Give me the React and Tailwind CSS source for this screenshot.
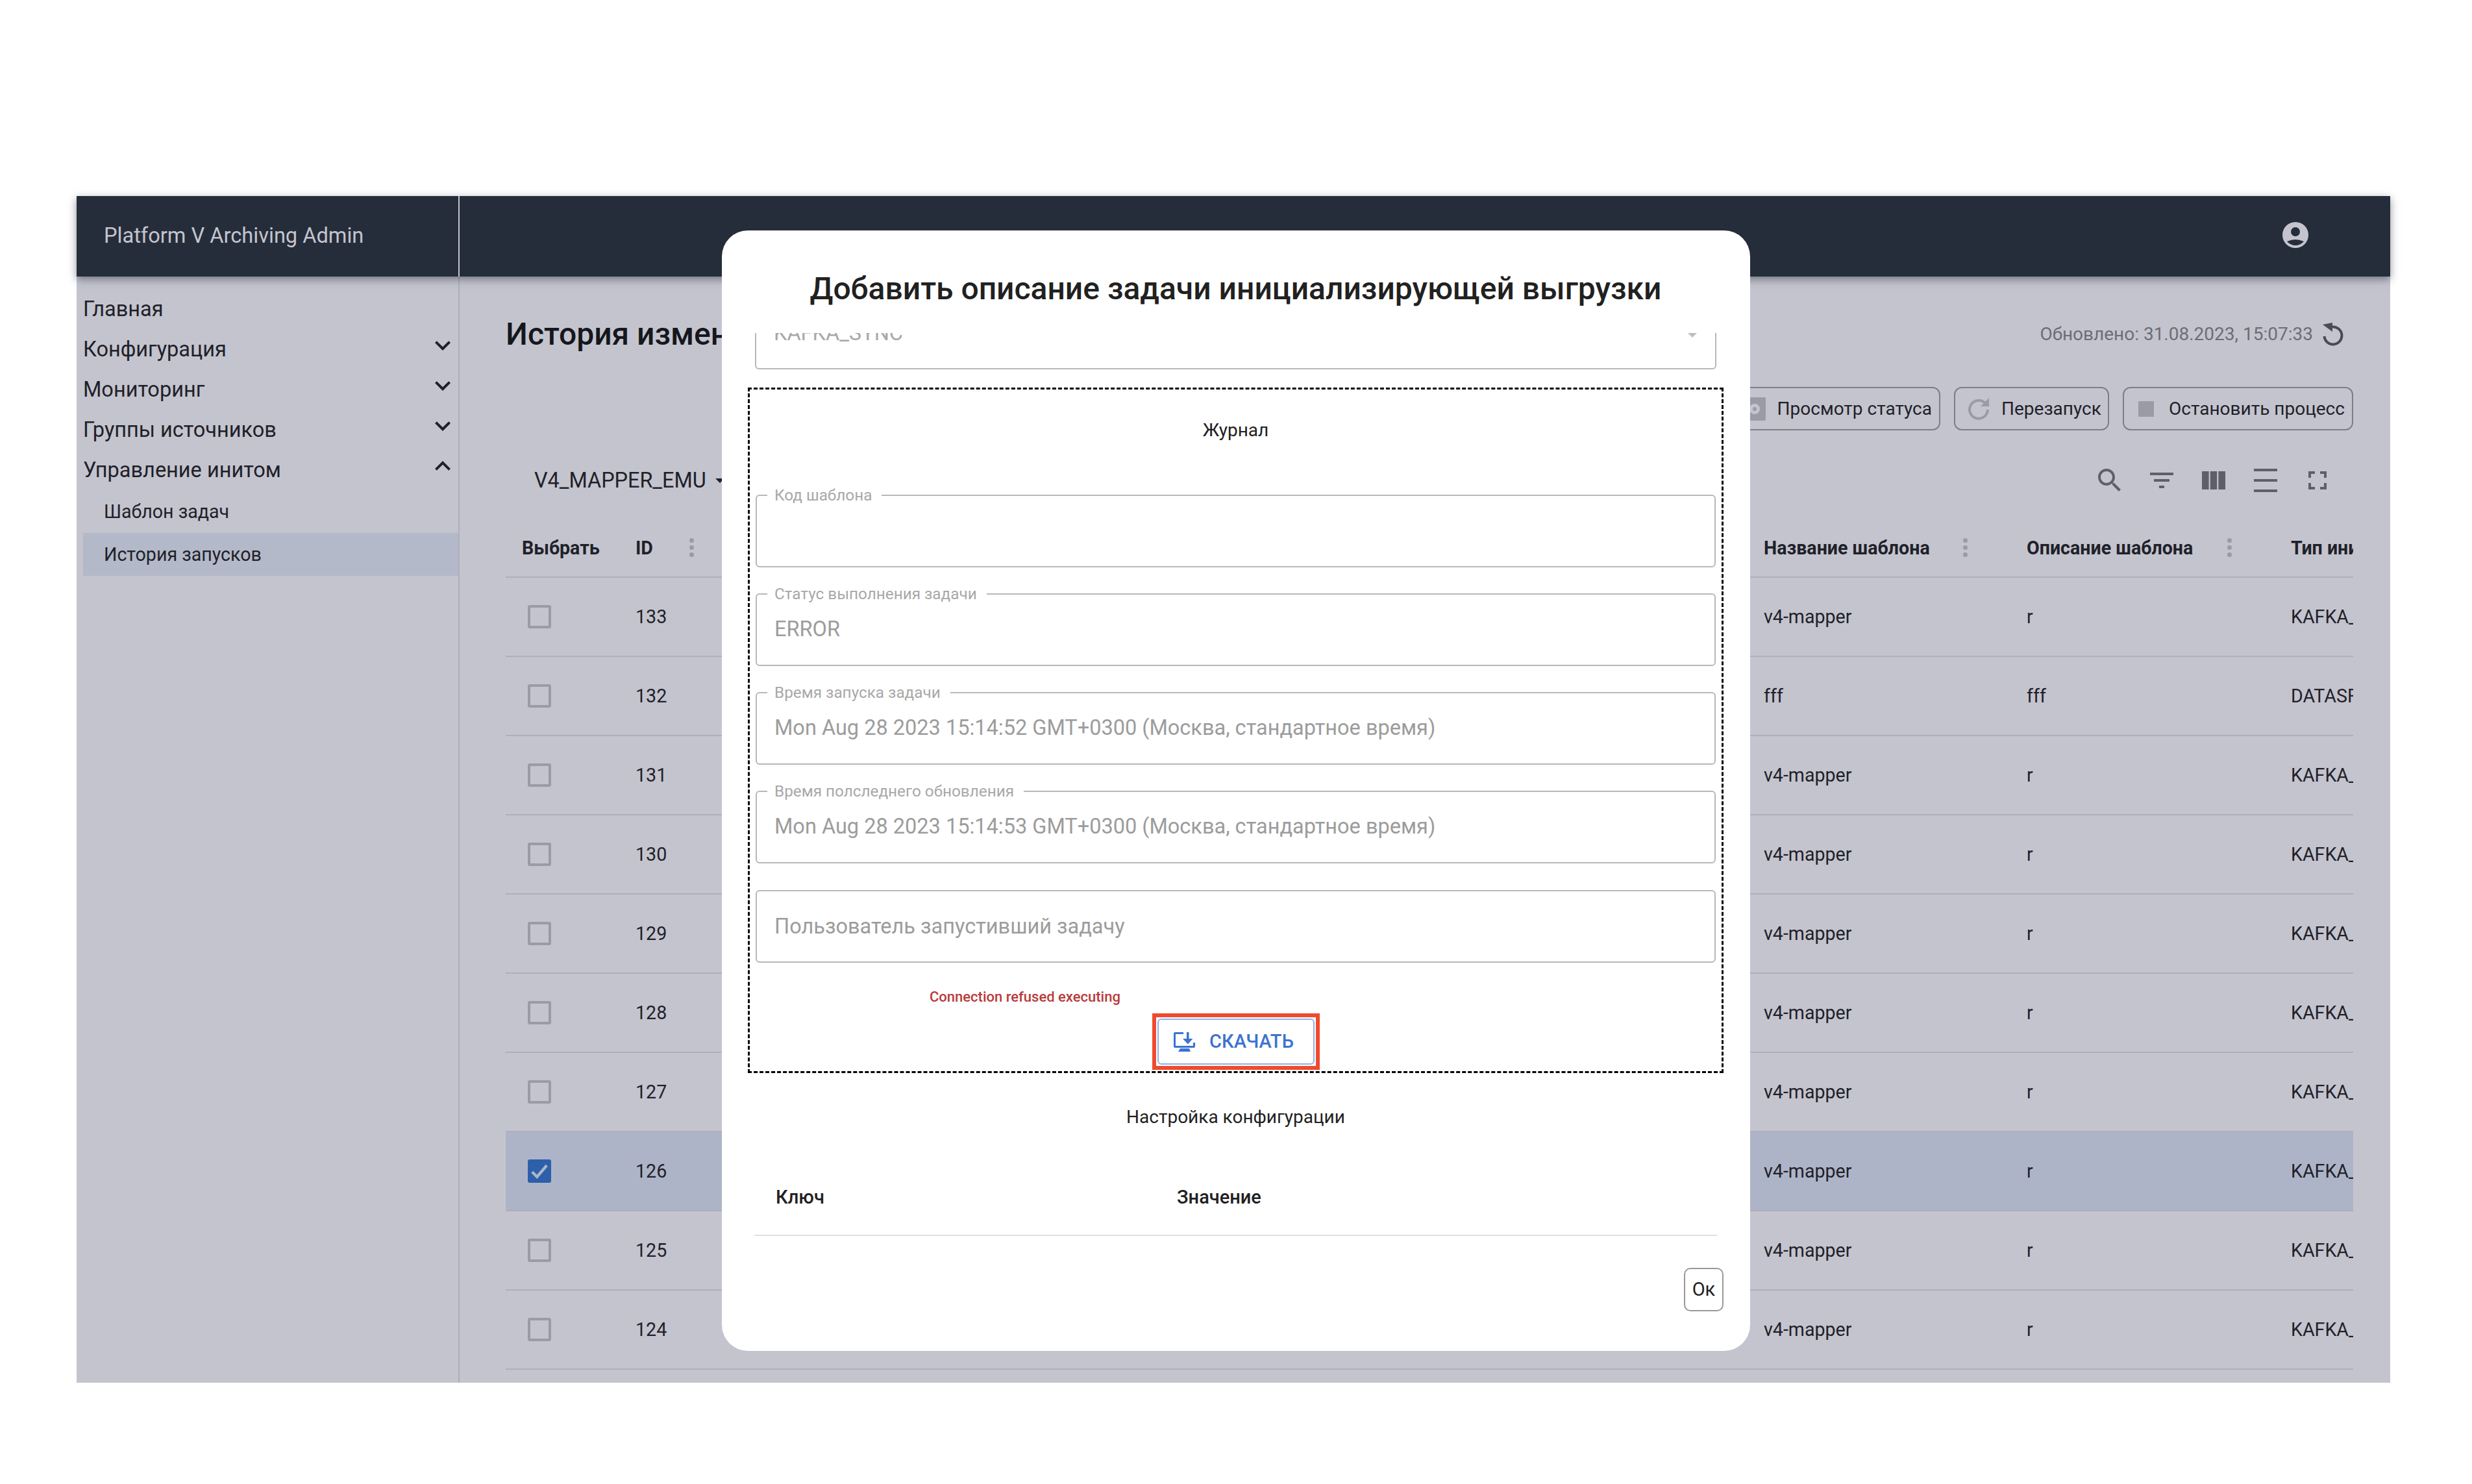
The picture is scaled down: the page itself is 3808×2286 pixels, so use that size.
const font = 'font-["Roboto",sans-serif]';

const menu = [
    { label: 'Конфигурация', icon: 'down' },
    { label: 'Мониторинг', icon: 'down' },
    { label: 'Группы источников', icon: 'down' },
    { label: 'Управление инитом', icon: 'up' },
];

const rows = [
    { id: 133, name: 'v4-mapper', desc: 'r', type: 'KAFKA_' },
    { id: 132, name: 'fff', desc: 'fff', type: 'DATASF' },
    { id: 131, name: 'v4-mapper', desc: 'r', type: 'KAFKA_' },
    { id: 130, name: 'v4-mapper', desc: 'r', type: 'KAFKA_' },
    { id: 129, name: 'v4-mapper', desc: 'r', type: 'KAFKA_' },
    { id: 128, name: 'v4-mapper', desc: 'r', type: 'KAFKA_' },
    { id: 127, name: 'v4-mapper', desc: 'r', type: 'KAFKA_' },
    { id: 126, name: 'v4-mapper', desc: 'r', type: 'KAFKA_', checked: true },
    { id: 125, name: 'v4-mapper', desc: 'r', type: 'KAFKA_' },
    { id: 124, name: 'v4-mapper', desc: 'r', type: 'KAFKA_' },
];

const fields = [
    { label: 'Код шаблона', value: '' },
    { label: 'Статус выполнения задачи', value: 'ERROR' },
    { label: 'Время запуска задачи', value: 'Mon Aug 28 2023 15:14:52 GMT+0300 (Москва, стандартное время)' },
    { label: 'Время полследнего обновления', value: 'Mon Aug 28 2023 15:14:53 GMT+0300 (Москва, стандартное время)' },
];

function Dots() {
    return (
        <div className="flex flex-col gap-[4px]">
            <span className="size-[7px] rounded-full bg-[#9a9ba4]" />
            <span className="size-[7px] rounded-full bg-[#9a9ba4]" />
            <span className="size-[7px] rounded-full bg-[#9a9ba4]" />
        </div>
    );
}

function Chevron({ up }) {
    return (
        <svg width="48" height="48" viewBox="0 0 24 24" fill="#1f2129" className="-translate-y-[6px]">
            {up ? <path d="m12 8-6 6 1.41 1.41L12 10.83l4.59 4.58L18 14z" /> : <path d="M16.59 8.59 12 13.17 7.41 8.59 6 10l6 6 6-6z" />}
        </svg>
    );
}

function Field({ label, value }) {
    return (
        <fieldset className="h-[123px] rounded-[6px] border-[2px] border-[#b8b8b8] px-[16px]">
            <legend className="pl-[11px] pr-[15px] text-[24.3px] leading-[24px] text-[#a8a8a8]">{label}</legend>
            <div className="ml-[11px] flex h-[85px] items-center text-[32.5px] text-[#9c9c9c]">{value}</div>
        </fieldset>
    );
}

export default function App() {
    return (
        <div className={`relative h-[2286px] w-[3808px] bg-white pl-[118px] pt-[302px] ${font}`}>
            <div className="flex h-[1828px] w-[3564px] flex-col bg-[#c4c4ce]">
                <header className="relative flex h-[124px] shrink-0 bg-[#252d3a] shadow-[0_4px_12px_rgba(30,34,46,0.5)]">
                    <div className="flex w-[590px] items-center border-r-[2px] border-[#c4c4ce] pb-[2px] pl-[42px] text-[32.6px] text-[#c4c4ce]">
                        Platform V Archiving Admin
                    </div>
                    <div className="flex flex-1 items-center justify-end pb-[4px] pr-[126px]">
                        <svg width="40" height="40" viewBox="0 0 40 40" fill="#c4c4ce">
                            <path
                                fillRule="evenodd"
                                d="M20 0a20 20 0 1 0 0 40 20 20 0 0 0 0-40Zm0 8a7 7 0 1 1 0 14 7 7 0 0 1 0-14ZM7 30q13-6 26 0-6 6-13 6T7 30Z"
                            />
                        </svg>
                    </div>
                </header>
                <div className="flex min-h-0 flex-1">
                    <aside className="w-[590px] shrink-0 border-r-[2px] border-[#aeafba] pl-[10px] pt-[19px] text-[32.5px] text-[#1f2129]">
                        <div className="flex h-[62px] items-center">Главная</div>
                        {menu.map((m) => (
                            <div key={m.label} className="flex h-[62px] items-center justify-between">
                                {m.label}
                                <Chevron up={m.icon === 'up'} />
                            </div>
                        ))}
                        <div className="flex h-[66px] items-center pl-[32px] text-[28.6px]">Шаблон задач</div>
                        <div className="flex h-[66px] items-center bg-[#b3b9c8] pl-[32px] text-[28.6px]">История запусков</div>
                    </aside>
                    <main className="min-w-0 flex-1 overflow-hidden pl-[71px] pr-[57px] pt-[64px]">
                        <div className="flex h-[50px] items-center justify-between">
                            <h1 className="text-[48px] font-medium text-[#15171d]">История изменений</h1>
                            <div className="flex items-center gap-[12px] pr-[14px] text-[28px] text-[#6c6d76]">
                                Обновлено: 31.08.2023, 15:07:33
                                <svg width="36" height="36" viewBox="0 0 36 36" fill="none" stroke="#4a4b54" strokeWidth="4">
                                    <path d="M18 6.500A13.500 13.500 0 1 1 5.500 21" />
                                    <path d="M3 3l15-3v14z" fill="#4a4b54" stroke="none" />
                                </svg>
                            </div>
                        </div>
                        <div className="mt-[56px] flex h-[67px] justify-end gap-[21px] text-[28px] text-[#1f2129]">
                            <button className="flex w-[420px] items-center justify-end gap-[18px] rounded-[12px] border-[2px] border-[#7d7e87] pr-[11px]">
                                <svg width="34" height="36" viewBox="0 0 34 36" fill="#9a9ba4">
                                    <path
                                        fillRule="evenodd"
                                        d="M2 0h30a2 2 0 0 1 2 2v32a2 2 0 0 1-2 2H2a2 2 0 0 1-2-2V2a2 2 0 0 1 2-2Zm15 10a8 8 0 1 0 0 16 8 8 0 0 0 0-16Zm0 5a3 3 0 1 1 0 6 3 3 0 0 1 0-6Z"
                                    />
                                </svg>
                                Просмотр статуса
                            </button>
                            <button className="flex w-[239px] items-center gap-[18px] rounded-[12px] border-[2px] border-[#7d7e87] pl-[19px]">
                                <svg width="34" height="36" viewBox="0 0 34 36" fill="none" stroke="#9a9ba4" strokeWidth="4">
                                    <path d="M27 9A14 14 0 1 0 31 19" />
                                    <path d="M33 1v13H20z" fill="#9a9ba4" stroke="none" />
                                </svg>
                                Перезапуск
                            </button>
                            <button className="flex w-[355px] items-center gap-[23px] rounded-[12px] border-[2px] border-[#7d7e87] pl-[22px]">
                                <span className="size-[24px] bg-[#9a9ba4]" />
                                Остановить процесс
                            </button>
                        </div>
                        <div className="mt-[53px] flex h-[48px] items-center justify-between">
                            <div className="flex items-center gap-[14px] pl-[44px] text-[32.4px] text-[#1f2129]">
                                V4_MAPPER_EMU
                                <span className="h-0 w-0 border-x-[7px] border-t-[7px] border-x-transparent border-t-[#1f2129]" />
                            </div>
                            <div className="flex items-center gap-[32px] pr-[31px]">
                                <svg width="48" height="48" viewBox="0 0 24 24" fill="#5e5f69">
                                    <path d="M15.500 14h-.79l-.28-.27C15.410 12.590 16 11.110 16 9.500 16 5.910 13.090 3 9.500 3S3 5.910 3 9.500 5.910 16 9.500 16c1.610 0 3.090-.59 4.230-1.570l.27.28v.79l5 4.990L20.490 19l-4.990-5zm-6 0C7.010 14 5 11.990 5 9.500S7.010 5 9.500 5 14 7.010 14 9.500 11.990 14 9.500 14z" />
                                </svg>
                                <svg width="48" height="48" viewBox="0 0 24 24" fill="#5e5f69">
                                    <path d="M10 18h4v-2h-4v2zM3 6v2h18V6H3zm3 7h12v-2H6v2z" />
                                </svg>
                                <svg width="48" height="48" viewBox="0 0 24 24" fill="#5e5f69">
                                    <path d="M3 5h5.300v14H3zM9.400 5h5.200v14H9.400zM15.700 5H21v14h-5.300z" />
                                </svg>
                                <svg width="48" height="48" viewBox="0 0 24 24" fill="#5e5f69">
                                    <path d="M3 3h18v2H3zM3 11h18v2H3zM3 19h18v2H3z" />
                                </svg>
                                <svg width="48" height="48" viewBox="0 0 24 24" fill="#5e5f69">
                                    <path d="M7 14H5v5h5v-2H7v-3zm-2-4h2V7h3V5H5v5zm12 7h-3v2h5v-5h-2v3zM14 5v2h3v3h2V5h-5z" />
                                </svg>
                            </div>
                        </div>
                        <div className="mt-[36px] text-[28.6px] text-[#1f2129]">
                            <div className="flex h-[90px] items-center border-b-[2px] border-[#aeafba] font-bold">
                                <div className="w-[200px] pl-[25px]">Выбрать</div>
                                <div className="flex w-[1738px] items-center">
                                    <span className="w-[83px]">ID</span>
                                    <Dots />
                                </div>
                                <div className="flex w-[405px] items-center">
                                    <span className="w-[307px]">Название шаблона</span>
                                    <Dots />
                                </div>
                                <div className="flex w-[407px] items-center">
                                    <span className="w-[309px]">Описание шаблона</span>
                                    <Dots />
                                </div>
                                <div className="w-[96px] overflow-hidden whitespace-nowrap">Тип инициализации</div>
                            </div>
                            {rows.map((r) => (
                                <div key={r.id} className={`flex h-[122px] items-center border-b-[2px] border-[#aeafba] ${r.checked ? 'bg-[#aeb4c8]' : ''}`}>
                                    <div className="w-[200px] pl-[34px]">
                                        {r.checked ? (
                                            <span className="flex size-[36px] items-center justify-center rounded-[3px] bg-[#2d60aa]">
                                                <svg width="30" height="30" viewBox="0 0 24 24" fill="none" stroke="#aeb4c8" strokeWidth="3.4">
                                                    <path d="m3 13 6 6L21 5" />
                                                </svg>
                                            </span>
                                        ) : (
                                            <span className="block size-[36px] rounded-[3px] border-[4px] border-[#9a9ba4]" />
                                        )}
                                    </div>
                                    <div className="w-[1738px]">{r.id}</div>
                                    <div className="w-[405px]">{r.name}</div>
                                    <div className="w-[407px]">{r.desc}</div>
                                    <div className="w-[96px] overflow-hidden whitespace-nowrap">{r.type}</div>
                                </div>
                            ))}
                        </div>
                    </main>
                </div>
            </div>

            <div className="absolute left-[1112px] top-[355px] flex h-[1726px] w-[1584px] flex-col rounded-[40px] bg-white pl-[40px] pr-[41px]">
                <h2 className="flex h-[158px] shrink-0 items-center justify-center pt-[22px] text-[48px] font-medium text-[#212121]">
                    Добавить описание задачи инициализирующей выгрузки
                </h2>
                <div className="relative h-[56px] shrink-0 overflow-hidden">
                    <div className="absolute inset-x-[11px] bottom-0 flex h-[96px] items-start justify-between rounded-[6px] border-[2px] border-[#b8b8b8] pl-[27px] pr-[28px] pt-[14px] text-[32.5px] text-[#a8a8a8]">
                        KAFKA_SYNC
                        <span className="mt-[24px] h-0 w-0 border-x-[7px] border-t-[7px] border-x-transparent border-t-[#bdbdbd]" />
                    </div>
                </div>
                <div className="mt-[28px] h-[1056px] shrink-0 border-[3px] border-dashed border-black px-[9px]">
                    <div className="flex h-[126px] items-center justify-center text-[28px] text-[#212121]">Журнал</div>
                    <div className="mt-[25px] flex flex-col gap-[29px]">
                        {fields.map((f) => (
                            <Field key={f.label} label={f.label} value={f.value} />
                        ))}
                        <div className="mt-[12px] flex h-[112px] items-center rounded-[6px] border-[2px] border-[#b8b8b8] pl-[27px] text-[32.5px] text-[#9c9c9c]">
                            Пользователь запустивший задачу
                        </div>
                    </div>
                    <div className="mt-[40px] pl-[268px] text-[22px] font-medium leading-[26px] text-[#b83a3a]">Connection refused executing</div>
                    <div className="mt-[12px] flex justify-center">
                        <div className="flex h-[87px] w-[258px] items-center justify-center border-[6px] border-[#f04a2e] p-[2px]">
                            <button className="flex h-full w-full items-center justify-center gap-[21px] rounded-[6px] border-[2px] border-[#8fb2e8] pr-[6px] text-[29px] font-medium text-[#3b74cf]">
                                <svg width="34" height="30" viewBox="0 0 34 30" fill="#3b74cf">
                                    <path d="M15 0H2a2 2 0 0 0-2 2v20a2 2 0 0 0 2 2h29a2 2 0 0 0 2-2v-6h-3v5H3V3h12z" />
                                    <path d="M20 0h3.500v10h6L21.800 18.500 14 10h6zM10 25h14l2 5H7z" />
                                </svg>
                                СКАЧАТЬ
                            </button>
                        </div>
                    </div>
                </div>
                <div className="mt-[47px] text-center text-[28px] text-[#212121]">Настройка конфигурации</div>
                <div className="mx-[10px] flex h-[162px] items-center border-b-[2px] border-[#e0e0e0] pt-[46px] text-[29px] font-medium text-[#212121]">
                    <span className="w-[651px] pl-[33px]">Ключ</span>
                    <span>Значение</span>
                </div>
                <div className="mt-[49px] flex justify-end">
                    <button className="h-[67px] w-[61px] rounded-[10px] border-[2px] border-[#999] text-[29px] text-[#212121]">Ок</button>
                </div>
            </div>
        </div>
    );
}
